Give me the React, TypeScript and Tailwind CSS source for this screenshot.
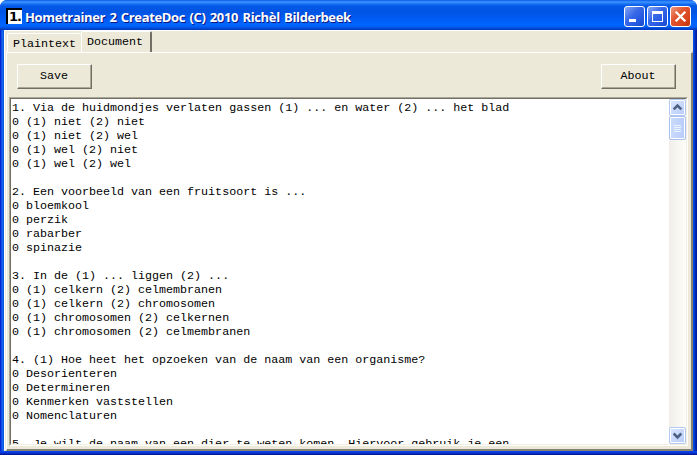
import React from "react";

const lines = [
  "1. Via de huidmondjes verlaten gassen (1) ... en water (2) ... het blad",
  "0 (1) niet (2) niet",
  "0 (1) niet (2) wel",
  "0 (1) wel (2) niet",
  "0 (1) wel (2) wel",
  "",
  "2. Een voorbeeld van een fruitsoort is ...",
  "0 bloemkool",
  "0 perzik",
  "0 rabarber",
  "0 spinazie",
  "",
  "3. In de (1) ... liggen (2) ...",
  "0 (1) celkern (2) celmembranen",
  "0 (1) celkern (2) chromosomen",
  "0 (1) chromosomen (2) celkernen",
  "0 (1) chromosomen (2) celmembranen",
  "",
  "4. (1) Hoe heet het opzoeken van de naam van een organisme?",
  "0 Desorienteren",
  "0 Determineren",
  "0 Kenmerken vaststellen",
  "0 Nomenclaturen",
  "",
  "5. Je wilt de naam van een dier te weten komen. Hiervoor gebruik je een",
];

function TitleButton({ kind }: { kind: "min" | "max" | "close" }) {
  const tone =
    kind === "close"
      ? "bg-[linear-gradient(135deg,#ee9a80_0%,#e0532f_40%,#d8441c_75%,#b8340f_100%)]"
      : "bg-[linear-gradient(135deg,#88a9f5_0%,#3a6ae8_40%,#2458e0_75%,#1a48c8_100%)]";
  return (
    <div className={`h-[21px] w-[21px] rounded-[3px] border border-white ${tone}`}>
      <svg width="19" height="19" viewBox="0 0 19 19" className="block" shapeRendering="crispEdges">
        {kind === "min" && <rect x="4" y="12" width="7" height="3" fill="#fff" />}
        {kind === "max" && (
          <path fillRule="evenodd" fill="#fff" d="M4 4h11v11H4zM5 7v7h9V7z" />
        )}
        {kind === "close" && (
          <path d="M4.7 4.7l9.6 9.6M14.3 4.7l-9.6 9.6" stroke="#fff" strokeWidth="2.3" fill="none" shapeRendering="auto" />
        )}
      </svg>
    </div>
  );
}

function PushButton({ label }: { label: string }) {
  return (
    <div className="flex h-[25px] w-[75px] border border-t-white border-l-white border-r-[#716f64] border-b-[#716f64]">
      <div className="flex flex-1 items-center justify-center border-r border-b border-[#aca899]">
        {label}
      </div>
    </div>
  );
}

function ScrollArrow({ down }: { down?: boolean }) {
  return (
    <div className="h-[17px] w-[17px] shrink-0 rounded-[2px] border border-[#b4c8f6] bg-[linear-gradient(135deg,#dbe6fe,#b9cdfb)] shadow-[inset_0_0_0_1px_#fff]">
      <svg width="15" height="15" viewBox="0 0 15 15" className="block">
        <path d={down ? "M3.7 5.5L7.5 9.3l3.8-3.8" : "M3.7 9.3L7.5 5.5l3.8 3.8"} fill="none" stroke="#4d6185" strokeWidth="2.6" />
      </svg>
    </div>
  );
}

export default function App() {
  return (
    <div className="h-[455px] w-[697px] overflow-hidden bg-white">
      <div className="flex h-full flex-col overflow-hidden rounded-t-[7px] bg-[linear-gradient(90deg,#0019cf_0px,#0831d9_1px,#166aee_2px,#0855dd_4px,#0855dd_692px,#0046e0_694px,#001ea0_696px)] font-['Liberation_Mono',monospace] text-[11.68px] leading-[14px] text-black">
        <div className="flex h-[30px] shrink-0 items-center bg-[linear-gradient(180deg,#0a5be8_0px,#3d95ff_2px,#1670f5_4px,#0458e6_6px,#0054e3_12px,#005cf5_19px,#0066ff_25px,#005bf0_27px,#0040c8_29px,#0038b8_30px)] pt-[2px] pr-[6px] pl-[6px]">
          <div className="flex h-4 w-4 items-center justify-center border-t-2 border-l-2 border-black bg-white font-['DejaVu_Sans',sans-serif] text-[13px] leading-[14px] font-bold tracking-[-1px]">
            1.
          </div>
          <div className="ml-[3px] flex-1 whitespace-pre pt-px font-['Open_Sans',sans-serif] text-[13px] leading-[18px] font-bold tracking-[-0.35px] text-white [word-spacing:1.3px] [text-shadow:1px_1px_0_#0a1883]">
            Hometrainer 2 CreateDoc (C) 2010 Richèl Bilderbeek
          </div>
          <div className="flex gap-[2px]">
            <TitleButton kind="min" />
            <TitleButton kind="max" />
            <TitleButton kind="close" />
          </div>
        </div>

        <div className="mr-[4px] ml-[4px] flex min-h-0 flex-1 flex-col border-t border-l border-white bg-[#ece9d8]">
          <div className="flex h-[21px] shrink-0 items-end pl-[2px]">
            <div className="h-[19px] w-[74px] rounded-t-[2px] border-t border-l border-white pt-[3px] pl-[5px]">
              Plaintext
            </div>
            <div className="h-[21px] w-[71px] rounded-t-[2px] border-t border-r-2 border-l border-t-white border-r-[#716f64] border-l-white pt-[3px] pl-[5px]">
              Document
            </div>
          </div>

          <div className="ml-px flex min-h-0 flex-1 flex-col border-t border-r-2 border-b-2 border-l border-t-white border-r-[#858273] border-b-[#858273] border-l-white">
            <div className="flex h-[44px] shrink-0 justify-between pt-[11px] pr-[15px] pl-[10px]">
              <PushButton label="Save" />
              <PushButton label="About" />
            </div>
            <div className="mr-[3px] mb-[3px] ml-[2px] flex min-h-0 flex-1 border border-t-[#aca899] border-r-white border-b-white border-l-[#aca899]">
              <div className="flex min-w-0 flex-1 border border-t-[#716f64] border-r-[#f1efe2] border-b-[#f1efe2] border-l-[#716f64] bg-white">
                <div className="min-w-0 flex-1 overflow-hidden pt-[2px] pl-px">
                  {lines.map((line, i) => (
                    <div key={i} className="h-[14px] whitespace-pre">
                      {line}
                    </div>
                  ))}
                </div>
                <div className="flex w-[17px] shrink-0 flex-col bg-[linear-gradient(90deg,#f1eee9,#fdfdfa)]">
                  <ScrollArrow />
                  <div className="flex h-[24px] w-[17px] flex-col items-center justify-center gap-px rounded-[2px] border border-[#a9bff0] bg-[linear-gradient(90deg,#cbdafd,#b8ccfb)] shadow-[inset_0_0_0_1px_#fff]">
                    <div className="h-px w-[7px] bg-[#eef4fe]" />
                    <div className="h-px w-[7px] bg-[#eef4fe]" />
                    <div className="h-px w-[7px] bg-[#eef4fe]" />
                    <div className="h-px w-[7px] bg-[#eef4fe]" />
                  </div>
                  <div className="flex-1" />
                  <ScrollArrow down />
                </div>
              </div>
            </div>
          </div>
        </div>
        <div className="h-[4px] shrink-0 bg-[linear-gradient(180deg,#0847e6,#0838dc_40%,#00138c)]" />
      </div>
    </div>
  );
}
